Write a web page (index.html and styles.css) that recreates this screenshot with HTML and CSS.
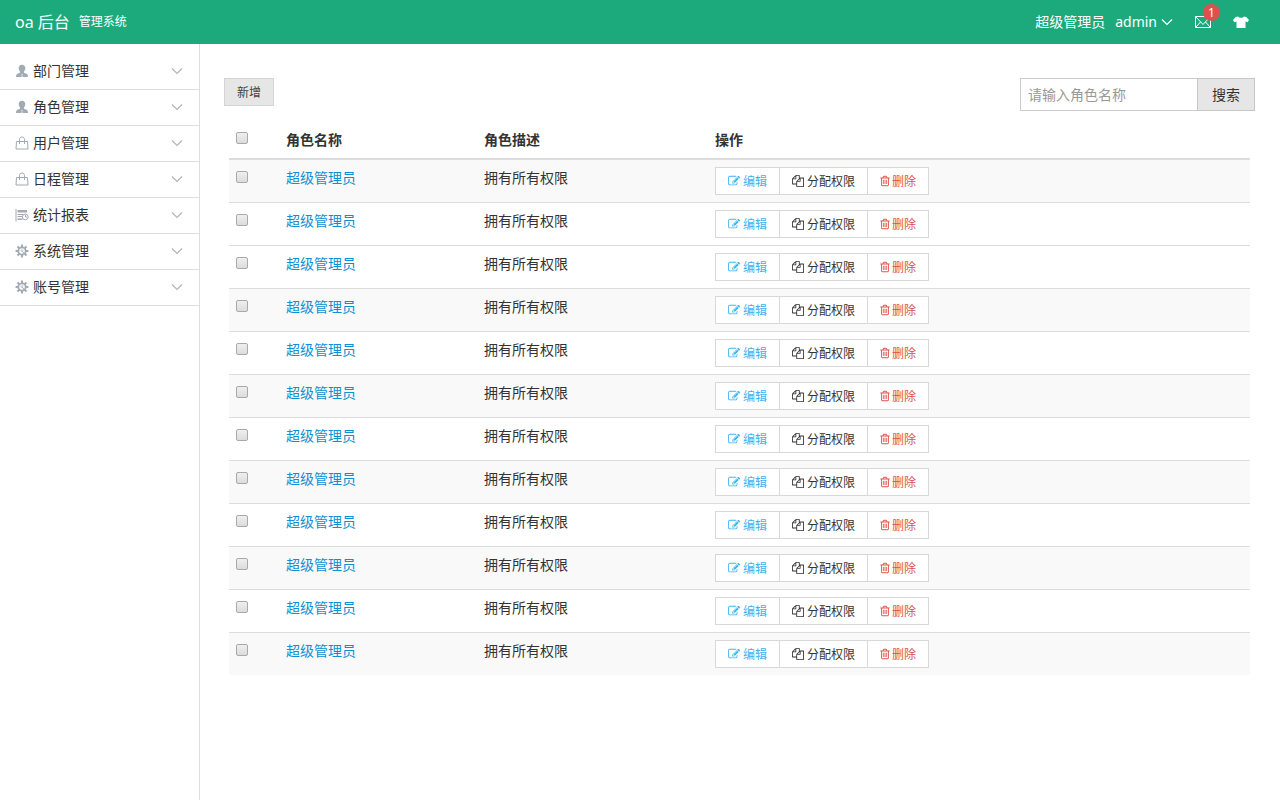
FILE: index.html
```html
<!DOCTYPE html>
<html lang="zh-CN">
<head>
<meta charset="utf-8">
<meta name="viewport" content="width=device-width, initial-scale=1">
<title>oa 后台管理系统</title>
<link rel="stylesheet" href="styles.css">
</head>
<body>
<svg class="sprite" aria-hidden="true">
  <symbol id="i-user" viewBox="0 0 14 14"><path d="M7 .8c2 0 3.300 1.300 3.300 3.300 0 1.500-.6 2.600-1.300 3.400v1.300c1.500.7 3.900 1 3.900 3V13H1.100v-1.200c0-2 2.400-2.300 3.900-3V7.500C4.300 6.700 3.700 5.600 3.700 4.100 3.700 2.100 5 .8 7 .8z" fill="currentColor"/><path d="M6 10h2l-.5 1.200.5 1.800H6l.5-1.800z" fill="#fff" opacity=".5"/></symbol>
  <symbol id="i-bag" viewBox="0 0 14 14"><g fill="none" stroke="currentColor"><path d="M1.500 5.500h11l.5 7.500H1z"/><path d="M4.500 8V3.500C4.500 2 5.500 1 7 1s2.500 1 2.500 2.500V8"/></g></symbol>
  <symbol id="i-report" viewBox="0 0 14 14"><path d="M.5 1h1v12.500h-1zM2.500 2H12v2.500H2.500zM2.500 6h6v1h-6zM2.500 8h4.500v1H2.500zM2.500 10.500h5V12h-5z" fill="currentColor"/><g fill="none" stroke="currentColor"><circle cx="10.300" cy="8.900" r="2.900"/><path d="M10.500 7v2h1.500"/></g></symbol>
  <symbol id="i-gear" viewBox="0 0 14 14"><g stroke="currentColor" stroke-width="2"><path d="M7 .6v2.600M7 10.800v2.600M.6 7h2.600M10.800 7h2.600M2.500 2.500l1.800 1.800M9.700 9.700l1.800 1.800M2.500 11.500l1.800-1.800M9.700 4.300l1.800-1.800"/></g><circle cx="7" cy="7" r="3.700" fill="none" stroke="currentColor" stroke-width="1.800"/><circle cx="7" cy="6.500" r="1.500" fill="currentColor" opacity=".5"/><path d="M7.500 7.500l2.500 3" stroke="currentColor"/></symbol>
  <symbol id="i-down" viewBox="0 0 12 8"><path d="M1 1.500l5 5 5-5" fill="none" stroke="currentColor" stroke-width="1.200"/></symbol>
  <symbol id="i-mail" viewBox="0 0 16 12"><path d="M.5.5h15v11H.5zM.5.5L8 8.500 15.500.5M.5 11.500l5-5.500M15.500 11.500l-5-5.500" fill="none" stroke="currentColor"/></symbol>
  <symbol id="i-shirt" viewBox="0 0 16 12"><path d="M5 .5C6 2.300 10 2.300 11 .5l2.300.6L16 4l-1.500 2.300-2-.7V12h-9V5.600l-2 .7L0 4l2.700-2.900z" fill="currentColor"/></symbol>
  <symbol id="i-edit" viewBox="0 0 1792 1792"><path fill="currentColor" d="M888 1184l116-116-152-152-116 116v56h96v96h56zm440-720q-16-16-33 1l-350 350q-17 17-1 33t33-1l350-350q17-17 1-33zm80 594v190q0 119-84.500 203.500t-203.500 84.500h-832q-119 0-203.500-84.500t-84.500-203.500v-832q0-119 84.500-203.500t203.500-84.500h832q63 0 117 25 15 7 18 23 3 17-9 29l-49 49q-14 14-32 8-23-6-45-6h-832q-66 0-113 47t-47 113v832q0 66 47 113t113 47h832q66 0 113-47t47-113v-126q0-13 9-22l64-64q15-15 35-7t20 29zm-96-738l288 288-672 672h-288v-288zm444 132l-92 92-288-288 92-92q28-28 68-28t68 28l152 152q28 28 28 68t-28 68z"/></symbol>
  <symbol id="i-copy" viewBox="0 0 1792 1792"><path fill="currentColor" d="M1696 384q40 0 68 28t28 68v1216q0 40-28 68t-68 28h-960q-40 0-68-28t-28-68v-288h-544q-40 0-68-28t-28-68v-672q0-40 20-88t48-76l408-408q28-28 76-48t88-20h416q40 0 68 28t28 68v328q68-40 128-40h416zm-544 213l-299 299h299v-299zm-640-384l-299 299h299v-299zm196 647l316-316v-416h-384v416q0 40-28 68t-68 28h-416v640h512v-256q0-40 20-88t48-76zm956 804v-1152h-384v416q0 40-28 68t-68 28h-416v640h896z"/></symbol>
  <symbol id="i-trash" viewBox="192 0 1408 1792"><path fill="currentColor" d="M704 736v576q0 14-9 23t-23 9h-64q-14 0-23-9t-9-23v-576q0-14 9-23t23-9h64q14 0 23 9t9 23zm256 0v576q0 14-9 23t-23 9h-64q-14 0-23-9t-9-23v-576q0-14 9-23t23-9h64q14 0 23 9t9 23zm256 0v576q0 14-9 23t-23 9h-64q-14 0-23-9t-9-23v-576q0-14 9-23t23-9h64q14 0 23 9t9 23zm128 724v-948h-896v948q0 22 7 40.500t14.500 27 10.500 8.500h832q3 0 10.500-8.500t14.500-27 7-40.500zm-672-1076h448l-48-117q-7-9-17-11h-317q-10 2-17 11zm928 32v64q0 14-9 23t-23 9h-96v948q0 83-47 143.500t-113 60.500h-832q-66 0-113-58.500t-47-141.500v-952h-96q-14 0-23-9t-9-23v-64q0-14 9-23t23-9h309l70-167q15-37 54-63t79-26h320q40 0 79 26t54 63l70 167h309q14 0 23 9t9 23z"/></symbol>
</svg>

<header class="topbar">
  <div class="brand"><span class="brand-name">oa 后台</span><span class="brand-sub">管理系统</span></div>
  <div class="tools">
    <a class="account" href="#"><span>超级管理员</span><span class="login">admin<svg class="chevron-sm"><use href="#i-down"/></svg></span></a>
    <a class="tool mail" href="#" aria-label="消息"><svg class="tool-icon"><use href="#i-mail"/></svg><span class="badge">1</span></a>
    <a class="tool" href="#" aria-label="换肤"><svg class="tool-icon"><use href="#i-shirt"/></svg></a>
  </div>
</header>

<div class="layout">
  <nav class="sidebar">
    <a class="menu" href="#"><svg class="menu-icon"><use href="#i-user"/></svg><span>部门管理</span><svg class="chevron"><use href="#i-down"/></svg></a>
    <a class="menu" href="#"><svg class="menu-icon"><use href="#i-user"/></svg><span>角色管理</span><svg class="chevron"><use href="#i-down"/></svg></a>
    <a class="menu" href="#"><svg class="menu-icon"><use href="#i-bag"/></svg><span>用户管理</span><svg class="chevron"><use href="#i-down"/></svg></a>
    <a class="menu" href="#"><svg class="menu-icon"><use href="#i-bag"/></svg><span>日程管理</span><svg class="chevron"><use href="#i-down"/></svg></a>
    <a class="menu" href="#"><svg class="menu-icon"><use href="#i-report"/></svg><span>统计报表</span><svg class="chevron"><use href="#i-down"/></svg></a>
    <a class="menu" href="#"><svg class="menu-icon"><use href="#i-gear"/></svg><span>系统管理</span><svg class="chevron"><use href="#i-down"/></svg></a>
    <a class="menu" href="#"><svg class="menu-icon"><use href="#i-gear"/></svg><span>账号管理</span><svg class="chevron"><use href="#i-down"/></svg></a>
  </nav>

  <main class="content">
    <div class="toolbar">
      <button class="add" type="button">新增</button>
      <form class="search">
        <input class="search-input" type="text" placeholder="请输入角色名称" aria-label="角色名称">
        <button class="search-button" type="button">搜索</button>
      </form>
    </div>

    <table class="roles">
      <colgroup><col class="col-check"><col class="col-name"><col class="col-desc"><col></colgroup>
      <thead>
        <tr><th><input class="check" type="checkbox" aria-label="全选"></th><th>角色名称</th><th>角色描述</th><th>操作</th></tr>
      </thead>
      <tbody>
        <tr class="shaded"><td><input class="check" type="checkbox" aria-label="选择"></td><td><a href="#">超级管理员</a></td><td>拥有所有权限</td><td><div class="actions"><button type="button" class="edit"><svg><use href="#i-edit"/></svg>编辑</button><button type="button"><svg><use href="#i-copy"/></svg>分配权限</button><button type="button" class="delete"><svg><use href="#i-trash"/></svg>删除</button></div></td></tr>
        <tr><td><input class="check" type="checkbox" aria-label="选择"></td><td><a href="#">超级管理员</a></td><td>拥有所有权限</td><td><div class="actions"><button type="button" class="edit"><svg><use href="#i-edit"/></svg>编辑</button><button type="button"><svg><use href="#i-copy"/></svg>分配权限</button><button type="button" class="delete"><svg><use href="#i-trash"/></svg>删除</button></div></td></tr>
        <tr><td><input class="check" type="checkbox" aria-label="选择"></td><td><a href="#">超级管理员</a></td><td>拥有所有权限</td><td><div class="actions"><button type="button" class="edit"><svg><use href="#i-edit"/></svg>编辑</button><button type="button"><svg><use href="#i-copy"/></svg>分配权限</button><button type="button" class="delete"><svg><use href="#i-trash"/></svg>删除</button></div></td></tr>
        <tr class="shaded"><td><input class="check" type="checkbox" aria-label="选择"></td><td><a href="#">超级管理员</a></td><td>拥有所有权限</td><td><div class="actions"><button type="button" class="edit"><svg><use href="#i-edit"/></svg>编辑</button><button type="button"><svg><use href="#i-copy"/></svg>分配权限</button><button type="button" class="delete"><svg><use href="#i-trash"/></svg>删除</button></div></td></tr>
        <tr><td><input class="check" type="checkbox" aria-label="选择"></td><td><a href="#">超级管理员</a></td><td>拥有所有权限</td><td><div class="actions"><button type="button" class="edit"><svg><use href="#i-edit"/></svg>编辑</button><button type="button"><svg><use href="#i-copy"/></svg>分配权限</button><button type="button" class="delete"><svg><use href="#i-trash"/></svg>删除</button></div></td></tr>
        <tr class="shaded"><td><input class="check" type="checkbox" aria-label="选择"></td><td><a href="#">超级管理员</a></td><td>拥有所有权限</td><td><div class="actions"><button type="button" class="edit"><svg><use href="#i-edit"/></svg>编辑</button><button type="button"><svg><use href="#i-copy"/></svg>分配权限</button><button type="button" class="delete"><svg><use href="#i-trash"/></svg>删除</button></div></td></tr>
        <tr><td><input class="check" type="checkbox" aria-label="选择"></td><td><a href="#">超级管理员</a></td><td>拥有所有权限</td><td><div class="actions"><button type="button" class="edit"><svg><use href="#i-edit"/></svg>编辑</button><button type="button"><svg><use href="#i-copy"/></svg>分配权限</button><button type="button" class="delete"><svg><use href="#i-trash"/></svg>删除</button></div></td></tr>
        <tr class="shaded"><td><input class="check" type="checkbox" aria-label="选择"></td><td><a href="#">超级管理员</a></td><td>拥有所有权限</td><td><div class="actions"><button type="button" class="edit"><svg><use href="#i-edit"/></svg>编辑</button><button type="button"><svg><use href="#i-copy"/></svg>分配权限</button><button type="button" class="delete"><svg><use href="#i-trash"/></svg>删除</button></div></td></tr>
        <tr><td><input class="check" type="checkbox" aria-label="选择"></td><td><a href="#">超级管理员</a></td><td>拥有所有权限</td><td><div class="actions"><button type="button" class="edit"><svg><use href="#i-edit"/></svg>编辑</button><button type="button"><svg><use href="#i-copy"/></svg>分配权限</button><button type="button" class="delete"><svg><use href="#i-trash"/></svg>删除</button></div></td></tr>
        <tr class="shaded"><td><input class="check" type="checkbox" aria-label="选择"></td><td><a href="#">超级管理员</a></td><td>拥有所有权限</td><td><div class="actions"><button type="button" class="edit"><svg><use href="#i-edit"/></svg>编辑</button><button type="button"><svg><use href="#i-copy"/></svg>分配权限</button><button type="button" class="delete"><svg><use href="#i-trash"/></svg>删除</button></div></td></tr>
        <tr><td><input class="check" type="checkbox" aria-label="选择"></td><td><a href="#">超级管理员</a></td><td>拥有所有权限</td><td><div class="actions"><button type="button" class="edit"><svg><use href="#i-edit"/></svg>编辑</button><button type="button"><svg><use href="#i-copy"/></svg>分配权限</button><button type="button" class="delete"><svg><use href="#i-trash"/></svg>删除</button></div></td></tr>
        <tr class="shaded"><td><input class="check" type="checkbox" aria-label="选择"></td><td><a href="#">超级管理员</a></td><td>拥有所有权限</td><td><div class="actions"><button type="button" class="edit"><svg><use href="#i-edit"/></svg>编辑</button><button type="button"><svg><use href="#i-copy"/></svg>分配权限</button><button type="button" class="delete"><svg><use href="#i-trash"/></svg>删除</button></div></td></tr>
      </tbody>
    </table>
  </main>
</div>
</body>
</html>
```

FILE: styles.css
```css
* { box-sizing: border-box; }

body {
  margin: 0;
  min-height: 100vh;
  display: flex;
  flex-direction: column;
  background: #fff;
  color: #333;
  font: 14px/22px "Noto Sans", "Noto Sans CJK SC", sans-serif;
}

a { color: #0e90d2; text-decoration: none; }
button, input { font-family: inherit; margin: 0; border-radius: 0; }
svg { display: block; flex: none; }
.sprite { position: absolute; width: 0; height: 0; }

/* Top bar */
.topbar {
  height: 44px;
  padding: 0 31px 0 15px;
  display: flex;
  align-items: center;
  justify-content: space-between;
  background: #1caa7c;
  color: #fff;
}
.brand { display: flex; align-items: center; gap: 9px; }
.brand-name { font-size: 16px; }
.brand-sub { font-size: 12px; }
.tools { display: flex; align-items: center; gap: 22px; }
.tools a { color: #fff; }
.account { display: flex; align-items: center; gap: 10px; }
.login { display: flex; align-items: center; gap: 4px; }
.chevron-sm { width: 12px; height: 8px; }
.tool { position: relative; }
.tool-icon { width: 16px; height: 12px; }
.badge {
  position: absolute;
  left: 8px;
  top: -12px;
  width: 17px;
  height: 17px;
  border-radius: 50%;
  background: #dd514c;
  font-size: 12px;
  line-height: 17px;
  text-align: center;
}

/* Sidebar */
.layout { flex: 1; display: flex; }
.sidebar {
  flex: none;
  width: 200px;
  padding-top: 10px;
  border-right: 1px solid #dedede;
}
.menu {
  display: flex;
  align-items: center;
  gap: 4px;
  height: 36px;
  padding: 0 16px 2px 15px;
  border-bottom: 1px solid #dedede;
  color: #333;
}
.menu-icon { width: 14px; height: 14px; color: #a2aab3; }
.chevron { width: 12px; height: 8px; margin-left: auto; color: #b4b4b4; }

/* Content */
.content { flex: 1; min-width: 0; padding: 34px 25px 34px 24px; }
.toolbar {
  display: flex;
  align-items: flex-start;
  justify-content: space-between;
  margin-bottom: 11px;
}
.add {
  height: 28px;
  padding: 0 12px;
  border: 1px solid #d4d4d4;
  background: #e6e6e6;
  color: #444;
  font-size: 12px;
}
.search { display: flex; }
.search-input {
  width: 177px;
  height: 33px;
  padding: 0 7px;
  border: 1px solid #ccc;
  border-right: 0;
  font-size: 14px;
}
.search-input::placeholder { color: #999; }
.search-button {
  height: 33px;
  padding: 0 14px 2px;
  border: 1px solid #c7c7c7;
  background: #e6e6e6;
  color: #333;
  font-size: 14px;
}

/* Role table */
.roles {
  width: calc(100% - 10px);
  margin: 0 5px;
  table-layout: fixed;
  border-spacing: 0;
}
.col-check { width: 50px; }
.col-name { width: 198px; }
.col-desc { width: 231px; }
.roles th, .roles td { padding: 7px; text-align: left; vertical-align: top; }
.roles th { border-bottom: 2px solid #ddd; font-weight: 700; }
.roles td { border-top: 1px solid #ddd; }
.roles tbody tr:first-child td { border-top: 0; }
.shaded { background: #f9f9f9; }
.check {
  appearance: none;
  display: block;
  width: 12px;
  height: 12px;
  margin-top: 4px;
  border: 1px solid #a9a9a9;
  border-radius: 2px;
  background: linear-gradient(#efefef, #dcdcdc);
}
.roles th .check { margin-top: 3px; }

.actions { display: flex; }
.actions button {
  display: flex;
  align-items: center;
  gap: 3px;
  height: 28px;
  padding: 0 12px;
  border: 1px solid #d8d8d8;
  background: #fff;
  color: #333;
  font-size: 12px;
}
.actions button + button { margin-left: -1px; }
.actions svg { width: 12px; height: 12px; }
.actions .edit { color: #3bb4f2; }
.actions .delete { color: #dd514c; gap: 2px; }
.actions .delete svg { width: 10px; }
```
